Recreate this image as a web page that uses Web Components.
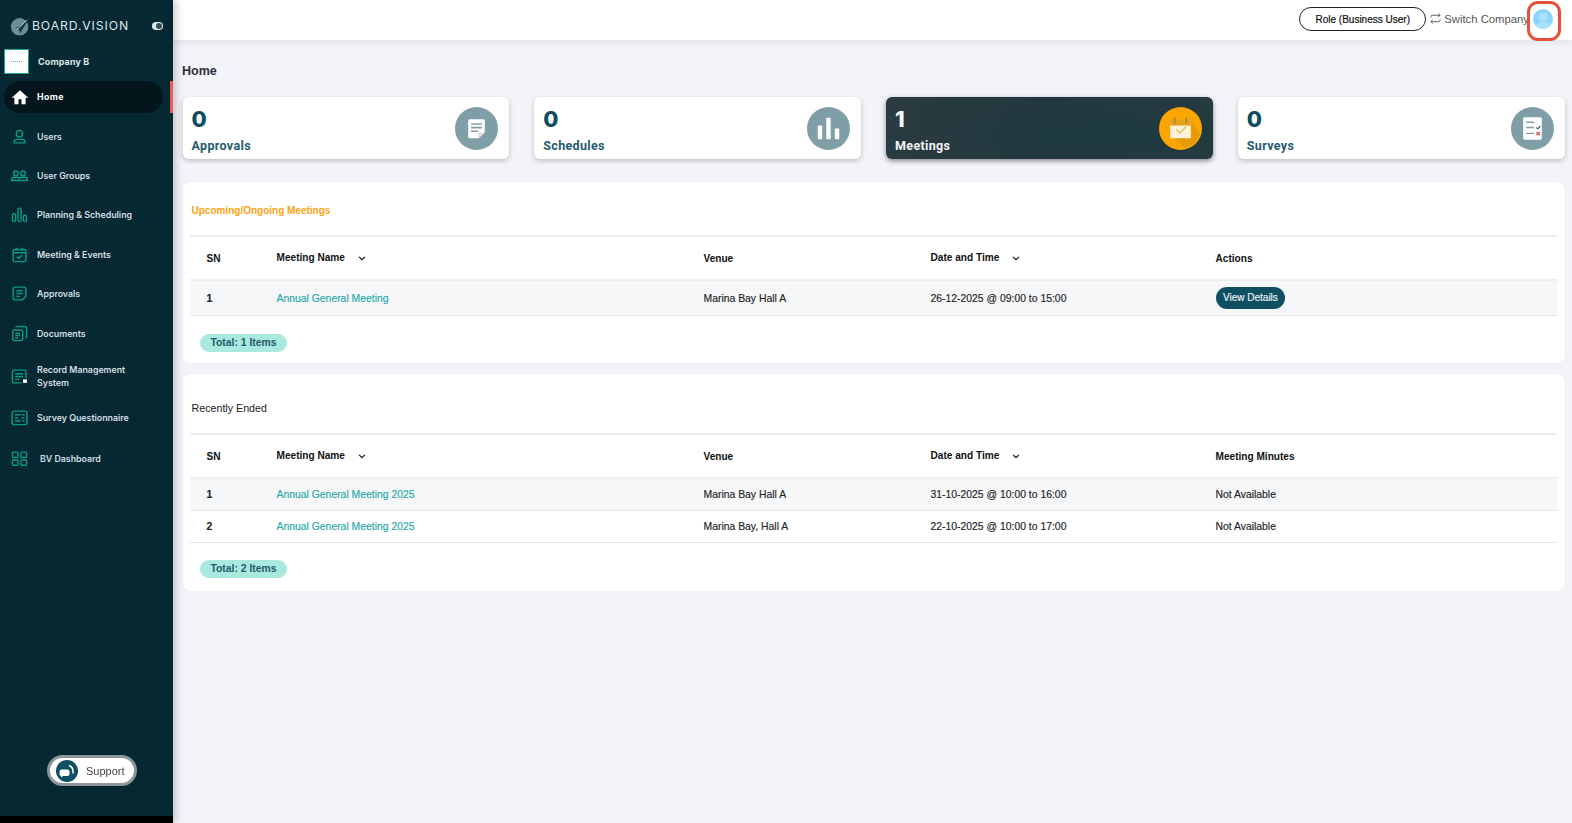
<!DOCTYPE html>
<html lang="en">
<head>
<meta charset="UTF-8" />
<title>Board Vision Home</title>
<style>
  html, body { margin: 0; height: 100%; overflow: hidden; }
  body { font-family: "Liberation Sans", Arial, sans-serif; background: #f3f4f9; }
</style>
</head>
<body>
<bv-app>
  <bv-sidebar slot="sidebar">
    <bv-nav-item label="Home" icon="home" active></bv-nav-item>
    <bv-nav-item label="Users" icon="user"></bv-nav-item>
    <bv-nav-item label="User Groups" icon="group"></bv-nav-item>
    <bv-nav-item label="Planning &amp; Scheduling" icon="plan"></bv-nav-item>
    <bv-nav-item label="Meeting &amp; Events" icon="cal"></bv-nav-item>
    <bv-nav-item label="Approvals" icon="note"></bv-nav-item>
    <bv-nav-item label="Documents" icon="docs"></bv-nav-item>
    <bv-nav-item label="Record Management System" icon="record" two></bv-nav-item>
    <bv-nav-item label="Survey Questionnaire" icon="survey"></bv-nav-item>
    <bv-nav-item label="BV Dashboard" icon="grid" wide style="margin-top:2px"></bv-nav-item>
  </bv-sidebar>
  <bv-header slot="header"></bv-header>

  <h1 style="margin:0;font:700 12.5px 'Liberation Sans',sans-serif;color:#2c2f38;line-height:16px;padding:23px 0 0 9px">Home</h1>
  <div class="cards" style="display:grid;grid-template-columns:repeat(4,1fr);gap:25px;padding:18px 7.5px 0 9.5px">
    <bv-stat-card value="0" label="Approvals" icon="note"></bv-stat-card>
    <bv-stat-card value="0" label="Schedules" icon="bars"></bv-stat-card>
    <bv-stat-card value="1" label="Meetings" icon="cal" dark></bv-stat-card>
    <bv-stat-card value="0" label="Surveys" icon="survey"></bv-stat-card>
  </div>
  <div style="display:flex;flex-direction:column;gap:11px;padding:23px 7.5px 0 9.5px">
    <bv-panel heading="Upcoming/Ongoing Meetings" accent last-col="Actions" total="Total: 1 Items"
      rows='[["1","Annual General Meeting","Marina Bay Hall A","26-12-2025 @ 09:00 to 15:00","@view"]]'></bv-panel>
    <bv-panel heading="Recently Ended" last-col="Meeting Minutes" total="Total: 2 Items"
      rows='[["1","Annual General Meeting 2025","Marina Bay Hall A","31-10-2025 @ 10:00 to 16:00","Not Available"],["2","Annual General Meeting 2025","Marina Bay, Hall A","22-10-2025 @ 10:00 to 17:00","Not Available"]]'></bv-panel>
  </div>
</bv-app>

<script>
  // shared icon paths, drawn on a 24 box
  const NAV_ICONS = {
    home: '<path fill="#fff" stroke="none" d="M12 3 1 13h3.500v8.500H10V15h4v6.500h5.500V13H23z"/>',
    user: '<circle cx="12" cy="8" r="4.500"/><path d="M4.500 21v-1.500c0-2 1.500-3.500 3.500-3.500h8c2 0 3.500 1.500 3.500 3.500V21z"/>',
    group: '<circle cx="7" cy="9" r="3.300"/><circle cx="17" cy="9" r="3.300"/><path d="M1 19v-1.500c0-2 1-3 3-3h6c1.500 0 2 1 2 3 0-2 .5-3 2-3h6c2 0 3 1 3 3V19z"/>',
    plan: '<rect x="2" y="11" width="4.500" height="11" rx="2.200"/><rect x="9.800" y="3" width="4.500" height="19" rx="2.200"/><rect x="17.500" y="13" width="4.500" height="9" rx="2.200"/>',
    cal: '<rect x="3" y="5" width="18" height="17" rx="2"/><path d="M3 9.500h18M8 2.500v4M16 2.500v4M8.500 15l2.500 2.500 4.500-4.500"/>',
    note: '<path d="M6 3h12a3 3 0 0 1 3 3v10l-5 5H6a3 3 0 0 1-3-3V6a3 3 0 0 1 3-3z"/><path d="M7.500 8h9M7.500 12h9M7.500 16h5"/>',
    docs: '<rect x="2.500" y="7" width="14" height="15" rx="3"/><path d="M7 3.500c0-.8 1-1.500 2-1.500h10c1.500 0 3 1 3 3v11c0 1-.7 1.800-1.500 2M6 12h7M6 15h7M6 18h4"/>',
    record: '<path d="M21 14V5a2 2 0 0 0-2-2H4a2 2 0 0 0-2 2v14a2 2 0 0 0 2 2h11"/><path d="M6 8h11M6 12h11M6 16h6"/><rect x="17" y="16" width="5.500" height="5" fill="#fff" stroke="none"/>',
    survey: '<rect x="1.500" y="3" width="21" height="19" rx="3"/><path d="M5.500 8h8M5.500 12.500h5M5.500 17h8M16 8h3M15 12.500h4M16 17h3"/>',
    grid: '<rect x="2" y="3" width="8" height="7.500" rx="1.500"/><rect x="14" y="3" width="8" height="7.500" rx="1.500"/><rect x="2" y="14" width="8" height="7.500" rx="1.500"/><rect x="14" y="14" width="8" height="7.500" rx="1.500"/>'
  };

  const CARD_ICONS = {
    note: '<path fill="#fff" d="M15 12.500h14a1.500 1.500 0 0 1 1.500 1.500v12L24 32H15a1.500 1.500 0 0 1-1.500-1.500V14a1.500 1.500 0 0 1 1.500-1.500z"/><path fill="#d8dcdd" d="M30.500 26 24 32v-4.500a1.500 1.500 0 0 1 1.500-1.500z"/><path fill="#7f9ea8" d="M16.500 16.500h11v1.600h-11zM16.500 20.300h11v1.600h-11zM16.500 24.100h7v1.600h-7z"/>',
    bars: '<g fill="#fff"><rect x="11" y="19" width="4.500" height="14" rx=".8"/><rect x="19.700" y="11" width="4.500" height="22" rx=".8"/><rect x="28.500" y="22" width="4.500" height="11" rx=".8"/></g>',
    cal: '<path fill="#e59a06" d="M33 14 42 27A21.500 21.500 0 0 1 27 42L11.500 28.500z"/><rect x="11.500" y="15" width="21" height="17" fill="#fdf3dd"/><rect x="11.500" y="13" width="21" height="6" fill="#e4a31c"/><path stroke="#a9822e" stroke-width="1.500" d="M16 10.500v6M28 10.500v6"/><path fill="none" stroke="#e8b650" stroke-width="1.200" d="m17.500 23 4 3.500 6-6"/>',
    survey: '<rect x="12.500" y="10.500" width="19" height="23" rx="1.500" fill="#fff"/><path stroke="#7f9ea8" stroke-width="1.500" d="M15.500 15.500h8M15.500 21h8M15.500 27h8"/><path fill="none" stroke="#556" stroke-width="1.200" d="m26 21 1.500 1.500 2.500-3"/><path stroke="#e0565b" stroke-width="1.400" d="m26 25.500 3.500 3.500m0-3.500L26 29"/>'
  };

  class BvApp extends HTMLElement {
    constructor() {
      super();
      this.attachShadow({ mode: 'open' }).innerHTML = `
        <style>
          :host { display: grid; grid-template-columns: 173px 1fr; height: 823px; }
          .side { background: #000; position: relative; z-index: 2; box-shadow: 3px 0 8px rgba(0,0,0,.2); }
          .right { display: flex; flex-direction: column; min-width: 0; }
        </style>
        <div class="side"><slot name="sidebar"></slot></div>
        <div class="right"><slot name="header"></slot><main><slot></slot></main></div>`;
    }
  }

  class BvSidebar extends HTMLElement {
    constructor() {
      super();
      this.attachShadow({ mode: 'open' }).innerHTML = `
        <style>
          :host { display: flex; flex-direction: column; height: 816px; background: #052833; box-sizing: border-box; position: relative; }
          .brand { display: flex; align-items: center; height: 49px; padding: 2px 0 0 10px; box-sizing: border-box; }
          .brand span { font: 400 12.200px "Inter", sans-serif; letter-spacing: .9px; color: #dfe7ea; margin-left: 1px; }
          .toggle { margin-left: auto; margin-right: 10px; width: 11px; height: 8px; border-radius: 4px; background: #dfe7ea; position: relative; }
          .toggle::after { content: ""; position: absolute; right: 1px; top: 1px; width: 6px; height: 6px; border-radius: 50%; background: #33505a; }
          .company { display: flex; align-items: center; height: 25px; padding-left: 4px; }
          .logo { width: 23px; height: 23px; background: #fff; border: 1px solid #1aa58f; display: grid; place-items: center; flex: none; }
          .logo i { display: block; width: 11px; height: 1px; border-top: 1.500px dotted #7f9bd0; }
          .company b { font: 700 9px "Inter", sans-serif; color: #dfe7ea; margin-left: 9px; letter-spacing: .1px; }
          nav { display: flex; flex-direction: column; margin-top: 3px; }
          .support { position: absolute; left: 47px; top: 755px; width: 90px; height: 31px; box-sizing: border-box; border-radius: 16px; background: #fff; border: 3px solid #8c9599; filter: blur(.3px); display: flex; align-items: center; padding-left: 6px; font: 400 11px "Liberation Sans", sans-serif; color: #444; gap: 8px; }
          .support svg { width: 22px; height: 22px; flex: none; }
        </style>
        <div class="brand">
          <svg width="21" height="21" viewBox="0 0 24 24"><circle cx="11" cy="13.500" r="10" fill="#6f8d96"/><path d="M5 13c1 1 3 1 5 0 5-3 9-7 13-11-3 5-5 9-8 13-1 2-2 4-3 6-1-4-3-6-7-8z" fill="#1c3c46"/><path d="M8 16c4-3 8-7 11-10" stroke="#dce6e8" stroke-width="1.100" fill="none"/></svg>
          <span>BOARD.VISION</span>
          <div class="toggle"></div>
        </div>
        <div class="company"><div class="logo"><i></i></div><b>Company B</b></div>
        <nav><slot></slot></nav>
        <div class="support">
          <svg viewBox="0 0 22 22"><circle cx="11" cy="11" r="11" fill="#0e4f62"/><path fill="#fff" d="M5 9.500h6.500a2 2 0 0 1 2 2V14a2 2 0 0 1-2 2H7l-2 1.500V16a2 2 0 0 1-1.500-2v-2.500A2 2 0 0 1 5 9.500z"/><path fill="none" stroke="#fff" stroke-width="1.600" d="M13 5.500c3 1 4.500 3.500 4 8"/></svg>
          <span>Support</span>
        </div>`;
    }
  }

  class BvNavItem extends HTMLElement {
    connectedCallback() {
      if (this.shadowRoot) return;
      const icon = NAV_ICONS[this.getAttribute('icon')];
      const two = this.hasAttribute('two');
      const size = this.getAttribute('icon') === 'home' ? 18 : 17;
      this.attachShadow({ mode: 'open' }).innerHTML = `
        <style>
          :host { display: block; height: ${two ? 45 : 39.4}px; position: relative; }
          .row { display: flex; align-items: center; height: 32px; margin: ${two ? 7.5 : 3.7}px 10px 0 4px; border-radius: 16px; padding-left: 7px; }
          :host([active]) .row { background: #04151c; }
          :host([active])::after { content: ""; position: absolute; right: 0; top: 3.7px; width: 3px; height: 32px; background: #ee5a55; }
          svg { width: ${size}px; height: ${size}px; flex: none; fill: none; stroke: #0b9a82; stroke-width: 2; }
          span { font: 600 8.800px/13px "Inter", sans-serif; color: #d5dfe3; margin-left: ${this.hasAttribute('wide') ? 12 : 9}px; letter-spacing: 0; ${two ? 'max-width: 92px;' : ''} }
          :host([active]) span { color: #fff; font-weight: 700; letter-spacing: .4px; margin-left: 8px; }
        </style>
        <div class="row"><svg viewBox="0 0 24 24">${icon}</svg><span>${this.getAttribute('label')}</span></div>`;
    }
  }

  class BvHeader extends HTMLElement {
    constructor() {
      super();
      this.attachShadow({ mode: 'open' }).innerHTML = `
        <style>
          :host { display: flex; align-items: center; justify-content: flex-end; height: 40px; background: #fff; box-shadow: 0 2px 8px rgba(0,0,0,.08); position: relative; z-index: 1; padding-right: 19px; box-sizing: border-box; font-family: "Liberation Sans", sans-serif; }
          .role { height: 24px; width: 127px; box-sizing: border-box; border: 1px solid #222; border-radius: 12px; display: grid; place-items: center; font-size: 10px; color: #111; font-weight: 400; -webkit-text-stroke: .2px #111; margin-bottom: 2px; }
          .switch { display: flex; align-items: center; gap: 3px; font-size: 11.300px; color: #555; margin: 0 4px 3px 4px; }
          .avatar { width: 20px; height: 20px; border-radius: 50%; background: #8fd3fb; margin-bottom: 2px; overflow: hidden; }
          .ring { position: absolute; right: 11px; top: 1px; width: 34px; height: 40px; box-sizing: border-box; border: 3.5px solid #e5503a; border-radius: 11px; }
        </style>
        <div class="role">Role (Business User)</div>
        <div class="switch">
          <svg width="11" height="11" viewBox="0 0 12 12" fill="none" stroke="#555" stroke-width="1"><path d="M1 5V4a1.500 1.500 0 0 1 1.500-1.500H11M9 .5l2 2-2 2M11 7v1a1.500 1.500 0 0 1-1.500 1.500H1M3 7.500l-2 2 2 2"/></svg>
          <span>Switch Company</span>
        </div>
        <div class="avatar"><svg width="20" height="20" viewBox="0 0 20 20"><circle cx="10" cy="8" r="4.500" fill="#a9e0fc"/><path d="M2 20c0-5 4-7 8-7s8 2 8 7z" fill="#a9e0fc"/></svg></div>
        <div class="ring"></div>`;
    }
  }

  class BvStatCard extends HTMLElement {
    connectedCallback() {
      if (this.shadowRoot) return;
      const dark = this.hasAttribute('dark');
      this.attachShadow({ mode: 'open' }).innerHTML = `
        <style>
          :host { display: flex; justify-content: space-between; align-items: center; height: 62px; border-radius: 6px; background: #fff; box-shadow: 0 2px 5px rgba(0,0,0,.22); padding: 0 11px 0 9px; box-sizing: border-box; }
          :host([dark]) { background: radial-gradient(ellipse at 65% 60%, #1b393f 0%, transparent 55%), linear-gradient(90deg, #2a3b41, #22383e 50%, #253b41); box-shadow: 0 2px 5px rgba(0,0,0,.45); }
          .num { font: 800 22px/26px "Inter", sans-serif; color: #0d4b5f; margin-top: 3px; }
          .lab { font: 700 12.5px/16px "Roboto", sans-serif; color: #245c6e; margin-top: 6px; letter-spacing: .35px; }
          :host([dark]) .num, :host([dark]) .lab { color: #f3f5f5; }
          svg { width: 43px; height: 43px; flex: none; }
        </style>
        <div><div class="num">${this.getAttribute('value')}</div><div class="lab">${this.getAttribute('label')}</div></div>
        <svg viewBox="0 0 44 44"><circle cx="22" cy="22" r="22" fill="${dark ? '#fca503' : '#7f9ea8'}"/>${CARD_ICONS[this.getAttribute('icon')]}</svg>`;
    }
  }

  class BvPanel extends HTMLElement {
    connectedCallback() {
      if (this.shadowRoot) return;
      const rows = JSON.parse(this.getAttribute('rows'));
      const accent = this.hasAttribute('accent');
      const chevron = '<svg width="8" height="5" viewBox="0 0 9 6" fill="none" stroke="#111" stroke-width="1.400"><path d="m1 1 3.500 3.500L8 1"/></svg>';
      const cell = (c) => c === '@view' ? '<a class="btn">View Details</a>' : c;
      const body = rows.map((r, i) => `
        <div class="row ${accent ? 'tall shaded' : i === 0 ? 'odd shaded' : 'odd'}">
          <div class="sn">${r[0]}</div><div class="link">${r[1]}</div><div>${r[2]}</div><div>${r[3]}</div><div>${cell(r[4])}</div>
        </div>`).join('');
      this.attachShadow({ mode: 'open' }).innerHTML = `
        <style>
          :host { display: block; background: #fff; border-radius: 8px; padding: 0 8px 0 7px; box-shadow: 0 0 3px rgba(0,0,0,.04); font: 400 10.400px "Liberation Sans", sans-serif; color: #222; }
          .title { height: 53px; display: flex; align-items: center; padding: 3px 0 0 2px; box-sizing: border-box; font-size: 10.700px; color: #222; }
          :host([accent]) .title { color: #fca311; font-weight: 700; font-size: 10px; }
          :host(:not([accent])) .title { height: 59px; padding-top: 9px; }
          .grid { display: grid; grid-template-columns: 70px 427px 227px 285px 1fr; padding-left: 17px; align-items: center; }
          .head { height: 46px; border-top: 2px solid #eceef1; border-bottom: 2px solid #eceef1; box-sizing: border-box; font-weight: 700; font-size: 10.100px; color: #111; }
          .head svg { margin-left: 10px; }
          .head .sort { padding-bottom: 2px; }
          .row { display: grid; grid-template-columns: 70px 427px 227px 285px 1fr; padding-left: 17px; align-items: center; box-sizing: border-box; border-bottom: 1px solid #e4e6ea; -webkit-text-stroke: .15px currentColor; }
          .row.tall { height: 35px; }
          .row.odd { height: 32px; }
          .row.shaded { background: #f6f7f9; }
          .sn { font-weight: 700; }
          .link { color: #26a8a8; }
          .btn { display: inline-block; background: #0e4f62; color: #e6eef0; border-radius: 11px; padding: 0 7.5px; line-height: 22px; font-size: 10px; -webkit-text-stroke: .2px #e6eef0; }
          .foot { height: ${accent ? 47 : 48}px; padding: ${accent ? 18 : 17}px 0 0 10.5px; box-sizing: border-box; }
          .pill { display: inline-block; width: 87px; height: 18px; line-height: 18px; text-align: center; border-radius: 9px; background: #a8eadd; color: #245c6e; font-weight: 700; font-size: 10.400px; }
        </style>
        <div class="title">${this.getAttribute('heading')}</div>
        <div class="grid head">
          <div>SN</div><div class="sort">Meeting Name ${chevron}</div><div>Venue</div><div class="sort">Date and Time ${chevron}</div><div>${this.getAttribute('last-col')}</div>
        </div>
        ${body}
        <div class="foot"><span class="pill">${this.getAttribute('total')}</span></div>`;
    }
  }

  customElements.define('bv-app', BvApp);
  customElements.define('bv-sidebar', BvSidebar);
  customElements.define('bv-nav-item', BvNavItem);
  customElements.define('bv-header', BvHeader);
  customElements.define('bv-stat-card', BvStatCard);
  customElements.define('bv-panel', BvPanel);
</script>
</body>
</html>
